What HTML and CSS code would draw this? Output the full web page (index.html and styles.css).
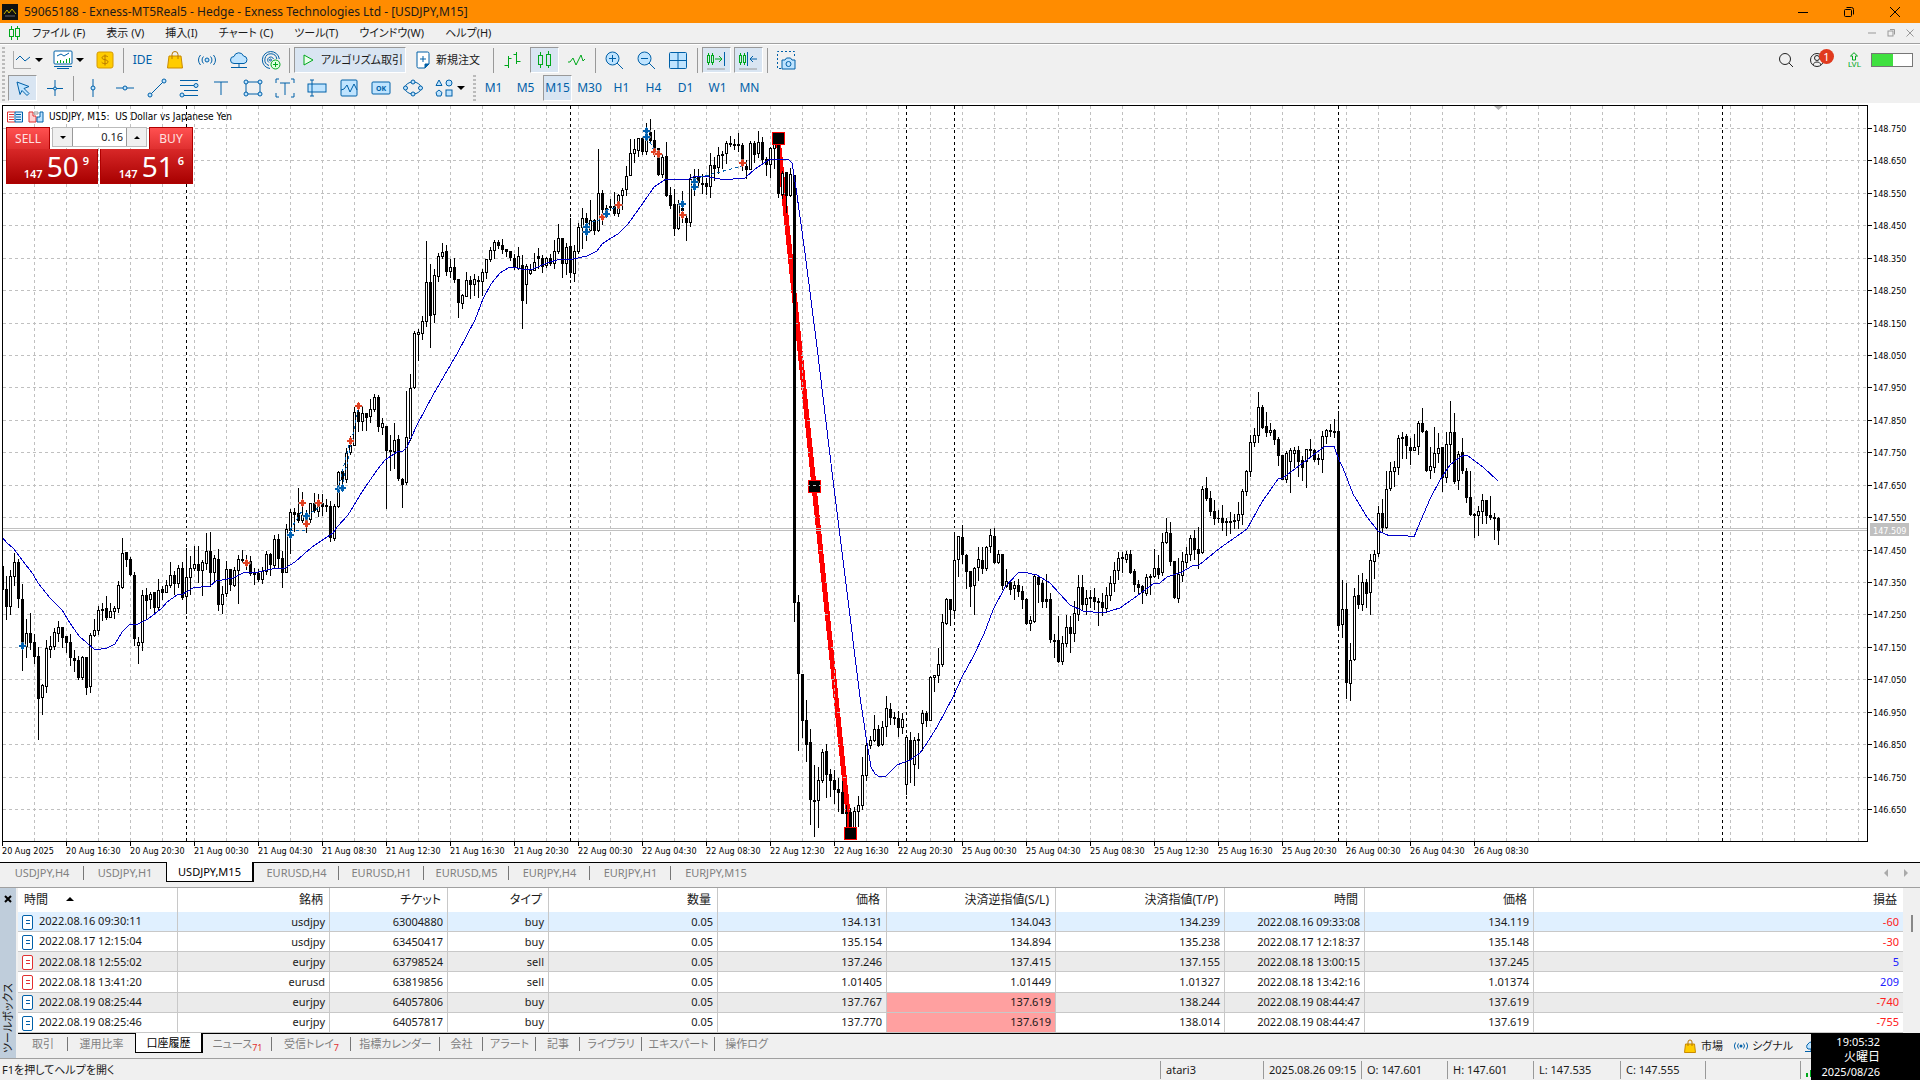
FILE: index.html
```
<!DOCTYPE html>
<html lang="ja">
<head>
    <meta charset="UTF-8">
    <meta name="viewport" content="width=device-width, initial-scale=1.0">
    <title>59065188 - Exness-MT5Real5 - Hedge - Exness Technologies Ltd - [USDJPY,M15]</title>
    <link rel="stylesheet" href="styles.css">
</head>
<body>
    <header class="titlebar">
        <svg class="app-icon" viewBox="0 0 16 16"><rect width="16" height="16" fill="#111"/><path d="M2 10l3-4 2 3 3-4 4 5" fill="none" stroke="#c8b400"/><path d="M3 12h10" stroke="#667"/></svg>
        <h1>59065188 - Exness-MT5Real5 - Hedge - Exness Technologies Ltd - [USDJPY,M15]</h1>
        <div class="win-buttons">
            <button aria-label="最小化"><svg viewBox="0 0 12 12"><path d="M1 6.5h10"/></svg></button>
            <button aria-label="元に戻す"><svg viewBox="0 0 12 12"><rect x="1.5" y="3.5" width="7" height="7" rx="1"/><path d="M3.5 1.5h5a2 2 0 0 1 2 2v5"/></svg></button>
            <button aria-label="閉じる"><svg viewBox="0 0 12 12"><path d="M1 1l10 10M11 1l-10 10"/></svg></button>
        </div>
    </header>

    <nav class="menubar">
        <svg class="menu-icon" viewBox="0 0 12 14"><path d="M3.5 0v3M3.5 11v3M9.5 0v2M9.5 11v3"/><rect x="1.5" y="3.5" width="4" height="7"/><rect x="7.5" y="2.5" width="4" height="8"/></svg>
        <button>ファイル (F)</button>
        <button>表示 (V)</button>
        <button>挿入(I)</button>
        <button>チャート (C)</button>
        <button>ツール(T)</button>
        <button>ウインドウ(W)</button>
        <button>ヘルプ(H)</button>
        <div class="child-buttons">
            <button aria-label="チャートを最小化"><svg viewBox="0 0 8 8"><path d="M0 4h8"/></svg></button>
            <button aria-label="チャートを元に戻す"><svg viewBox="0 0 8 8"><rect x="1" y="2" width="5" height="5"/><path d="M3 .5h4.5v5"/></svg></button>
            <button aria-label="チャートを閉じる"><svg viewBox="0 0 8 8"><path d="M.5.5l7 7M7.5.5l-7 7"/></svg></button>
        </div>
    </nav>

    <div class="toolbars">
        <div class="toolbar">
            <span class="grip"></span>
            <button class="tool drop" aria-label="ラインチャート"><svg viewBox="0 0 20 20"><path d="M1.5 1v17.5H19" stroke="#aaa"/><path d="M4 10l4-4 5 5 5-4"/></svg><i></i></button>
            <button class="tool drop" aria-label="チャートウィンドウ"><svg viewBox="0 0 20 20"><rect x="1" y="1" width="18" height="13" rx="1" fill="#fff"/><path d="M1 16.5h18M4 18.5h12"/><path d="M4 6l4-2 3 2 5-3"/><path d="M4.5 13v-2M7.5 13v-3M10.5 13v-2M13.5 13v-4M16.5 13v-5" stroke="#00a81c"/></svg><i></i></button>
            <button class="tool" aria-label="口座"><svg viewBox="0 0 20 20"><rect x="2" y="2" width="16" height="16" rx="2" fill="#fc0" stroke="#d69a00"/><path d="M13 7c-1-1.5-6-1.5-6 .8 0 2.4 6 1.4 6 4 0 2.4-5 2.4-6.3.5M10 4.5v11" stroke="#b87800"/></svg></button>
            <span class="sep"></span>
            <button class="tool">IDE</button>
            <button class="tool" aria-label="マーケット"><svg viewBox="0 0 20 20"><path d="M4 6h12l1.5 12h-15z" fill="#fc0" stroke="#c98a00"/><path d="M7 9V4.5a3 3 0 0 1 6 0V9" stroke="#b87800"/></svg></button>
            <button class="tool" aria-label="シグナル"><svg viewBox="0 0 20 20"><circle cx="10" cy="10" r="2" fill="#bfe4ff"/><path d="M6.5 6.5a5 5 0 0 0 0 7M13.5 6.5a5 5 0 0 1 0 7M3.5 5a8 8 0 0 0 0 10M16.5 5a8 8 0 0 1 0 10"/></svg></button>
            <button class="tool" aria-label="VPS"><svg viewBox="0 0 20 20"><path d="M5 13.5a3.5 3.5 0 0 1 0-7 5 5 0 0 1 9.5-.5 3.8 3.8 0 0 1 .5 7.5z" fill="#bfe4ff"/><path d="M10 14v3M2 17.5h16"/></svg></button>
            <button class="tool" aria-label="配信"><svg viewBox="0 0 20 20"><path d="M9 18.5A8.5 8.5 0 1 1 18.3 9M8 15.5a6 6 0 1 1 7.8-6.5M8 12.5a3 3 0 1 1 4.5-3.5"/><circle cx="9.5" cy="10" r="1"/><circle cx="14.5" cy="14.5" r="4.5" fill="#dfffdf" stroke="#00a81c"/><path d="M12 14.5h5M14.5 12v5" stroke="#00a81c"/></svg></button>
            <span class="sep"></span>
            <button class="tool wide on"><svg viewBox="0 0 20 20"><path d="M6 5l9 5-9 5z" stroke="#00a81c" fill="#eaffea"/></svg>アルゴリズム取引</button>
            <button class="tool wide"><svg viewBox="0 0 20 20"><path d="M4 2h10.5a1.5 1.5 0 0 1 1.5 1.5V14l-4 4H5.5A1.5 1.5 0 0 1 4 16.5z" fill="#fff"/><path d="M16 14h-4v4z" fill="#0060a8"/><path d="M7 9h6M10 6v6"/></svg>新規注文</button>
            <span class="sep"></span>
            <button class="tool" aria-label="バーチャート"><svg viewBox="0 0 20 20" class="green"><path d="M6.5 6v12M2.5 15.5h4M6.5 8.5h3M14.5 2v12M11.5 4.5h3M14.5 11.5h4"/></svg></button>
            <button class="tool on" aria-label="ローソク足"><svg viewBox="0 0 20 20" class="green"><path d="M6.5 2v3M6.5 15v3M14.5 1v3M14.5 16v2"/><rect x="4.5" y="5.5" width="4" height="9"/><rect x="12.5" y="4.5" width="4" height="11"/></svg></button>
            <button class="tool" aria-label="ライン"><svg viewBox="0 0 20 20" class="green"><path d="M2 12h2l3-4 3 7 5-10 2 6 2-2"/></svg></button>
            <span class="sep"></span>
            <button class="tool" aria-label="拡大"><svg viewBox="0 0 20 20"><circle cx="8.5" cy="8.5" r="6.5" fill="#bfe4ff"/><path d="M13 13l6 6M5 8.5h7M8.5 5v7"/></svg></button>
            <button class="tool" aria-label="縮小"><svg viewBox="0 0 20 20"><circle cx="8.5" cy="8.5" r="6.5" fill="#bfe4ff"/><path d="M13 13l6 6M5 8.5h7"/></svg></button>
            <button class="tool" aria-label="タイル表示"><svg viewBox="0 0 20 20"><rect x="1.5" y="2.5" width="17" height="16" rx="1" fill="#bfe4ff"/><path d="M10 2.5v16M1.5 10.5h17"/></svg></button>
            <span class="sep"></span>
            <button class="tool on" aria-label="自動スクロール"><svg viewBox="0 0 20 20"><g class="green"><path d="M2.5 3v2M2.5 13v2M6.5 3v2M6.5 13v2M9 9h7M13 6l3 3-3 3"/><rect x="1.5" y="5.5" width="2" height="7"/><rect x="5.5" y="5.5" width="2" height="7"/></g><path d="M18.5 2v14"/><path d="M1 19h18" stroke="#999"/></svg></button>
            <button class="tool on" aria-label="チャートシフト"><svg viewBox="0 0 20 20"><g class="green"><path d="M2.5 3v2M2.5 13v2M6.5 3v2M6.5 13v2"/><rect x="1.5" y="5.5" width="2" height="7"/><rect x="5.5" y="5.5" width="2" height="7"/></g><path d="M9.5 2v14M12 9h7M15 6l-3 3 3 3"/><path d="M1 19h18" stroke="#999"/></svg></button>
            <span class="sep"></span>
            <button class="tool" aria-label="スクリーンショット"><svg viewBox="0 0 20 20"><path d="M5 18.5H1.5v-17h17V8" stroke-dasharray="2 2"/><path d="M6 10h3l1.5-2h4l1.5 2h3v9H6z" fill="#bfe4ff"/><circle cx="12.5" cy="14" r="2.5"/></svg></button>
            <div class="account">
                <button class="tool" aria-label="検索"><svg viewBox="0 0 20 20" class="dark"><circle cx="9" cy="9" r="5.5"/><path d="M13 13l4 4"/></svg></button>
                <button class="tool user" aria-label="通知"><svg viewBox="0 0 20 20" class="dark"><circle cx="9" cy="10" r="6.5"/><circle cx="9" cy="8" r="2.5"/><path d="M5 15c1-4 7-4 8 0"/></svg><b class="badge">1</b></button>
                <button class="lvl"><svg viewBox="0 0 10 9"><path d="M5 .7L8.5 4H6.5v4h-3V4H1.5z"/></svg>LVL</button>
                <span class="meter"><i></i></span>
            </div>
        </div>

        <div class="toolbar second">
            <span class="grip"></span>
            <button class="tool on" aria-label="カーソル"><svg viewBox="0 0 20 20"><path d="M4 4l12 4.5-5 2 5 5-2 2-5-5-2 4z" fill="#bfe4ff"/></svg></button>
            <button class="tool" aria-label="十字カーソル"><svg viewBox="0 0 20 20"><path d="M10 2v16M2 10.5h16"/><circle cx="10" cy="10.5" r="1.5" fill="#bfe4ff"/></svg></button>
            <span class="sep"></span>
            <button class="tool" aria-label="垂直線"><svg viewBox="0 0 20 20"><path d="M10 1v18"/><circle cx="10" cy="10" r="2" fill="#bfe4ff"/></svg></button>
            <button class="tool" aria-label="水平線"><svg viewBox="0 0 20 20"><path d="M1 10h18"/><circle cx="10" cy="10" r="2" fill="#bfe4ff"/></svg></button>
            <button class="tool" aria-label="トレンドライン"><svg viewBox="0 0 20 20"><path d="M3 17L17 3"/><circle cx="3" cy="17" r="2" fill="#bfe4ff"/><circle cx="17" cy="3" r="2" fill="#bfe4ff"/></svg></button>
            <button class="tool" aria-label="フィボナッチ"><svg viewBox="0 0 20 20"><path d="M1 2.5h18M1 7.5h14M5 12.5h14M5 17.5h14"/><circle cx="17" cy="7.5" r="2" fill="#bfe4ff"/><circle cx="3" cy="17" r="2" fill="#bfe4ff"/></svg></button>
            <button class="tool" aria-label="テキスト"><svg viewBox="0 0 20 20"><path d="M3 4h14M10 4v13"/></svg></button>
            <button class="tool" aria-label="長方形"><svg viewBox="0 0 20 20"><rect x="3" y="4" width="14" height="12"/><g fill="#bfe4ff"><circle cx="3" cy="4" r="2"/><circle cx="17" cy="4" r="2"/><circle cx="3" cy="16" r="2"/><circle cx="17" cy="16" r="2"/></g></svg></button>
            <button class="tool" aria-label="ラベル"><svg viewBox="0 0 20 20"><path d="M5 5h10M10 5v12M1 5V1h3M16 1h3v4M1 15v4h3M16 19h3v-4"/></svg></button>
            <button class="tool" aria-label="入力"><svg viewBox="0 0 20 20"><rect x="1" y="6" width="18" height="8" fill="#bfe4ff"/><path d="M5 2v16M3 2h4M3 18h4"/></svg></button>
            <button class="tool" aria-label="チャートオブジェクト"><svg viewBox="0 0 20 20"><rect x="2" y="2" width="16" height="16" rx="1" fill="#bfe4ff"/><path d="M2 12l3-1 3-4 3 7 4-8 3 6"/></svg></button>
            <button class="tool" aria-label="ボタン"><svg viewBox="0 0 20 20"><rect x="1" y="4" width="18" height="12" rx="1" fill="#bfe4ff"/><text x="10" y="13">OK</text></svg></button>
            <button class="tool" aria-label="楕円"><svg viewBox="0 0 20 20"><ellipse cx="10" cy="10" rx="8" ry="6"/><g fill="#bfe4ff"><circle cx="10" cy="4" r="2"/><circle cx="2.5" cy="10" r="2"/><circle cx="17.5" cy="10" r="2"/><circle cx="10" cy="16" r="2"/></g></svg></button>
            <button class="tool drop" aria-label="図形"><svg viewBox="0 0 20 20"><g fill="#bfe4ff"><path d="M5 2l3 5.5H2z"/><circle cx="15" cy="5" r="3"/><path d="M5 12l3 2.5-1 3.5H3l-1-3.5z"/><rect x="12" y="12" width="6" height="6"/></g></svg><i></i></button>
            <span class="grip"></span>
            <button class="tool">M1</button>
            <button class="tool">M5</button>
            <button class="tool on">M15</button>
            <button class="tool">M30</button>
            <button class="tool">H1</button>
            <button class="tool">H4</button>
            <button class="tool">D1</button>
            <button class="tool">W1</button>
            <button class="tool">MN</button>
        </div>
    </div>

    <main class="chart">
        <svg id="chart" viewBox="0 103 1920 759" role="img" aria-label="USDJPY M15"></svg>
        <div class="chart-title">
            <svg viewBox="0 0 16 12"><path d="M8 1H.5v10H8M2 3.5h5M2 6h5M2 8.5h5" stroke="#e03030" fill="none"/><path d="M8 1h7.5v10H8zM9 3.5h5M9 6h5M9 8.5h5" stroke="#0060a8" fill="#d8eeff"/></svg>
            <svg viewBox="0 0 16 12"><path d="M1 1h4v4h3v6H1z" stroke="#e03030" fill="#ffd0d0"/><path d="M15 1h-3v5H9v5h6z" stroke="#0060a8" fill="#bfe4ff"/><path d="M6 1h4v2H6z" stroke="#999" fill="#fff"/></svg>
            <span>USDJPY, M15:&nbsp; US Dollar vs Japanese Yen</span>
        </div>
        <form class="one-click">
            <button type="button" class="side sell">SELL</button>
            <div class="volume">
                <button type="button" aria-label="減らす"><i class="down"></i></button>
                <input type="text" value="0.16" aria-label="数量">
                <button type="button" aria-label="増やす"><i class="up"></i></button>
            </div>
            <button type="button" class="side buy">BUY</button>
            <button type="button" class="quote bid"><small>147</small><strong>50</strong><sup>9</sup></button>
            <button type="button" class="quote ask"><small>147</small><strong>51</strong><sup>6</sup></button>
        </form>
    </main>

    <nav class="chart-tabs">
        <button>USDJPY,H4</button>
        <button class="plain">USDJPY,H1</button>
        <button class="active">USDJPY,M15</button>
        <button>EURUSD,H4</button>
        <button>EURUSD,H1</button>
        <button>EURUSD,M5</button>
        <button>EURJPY,H4</button>
        <button>EURJPY,H1</button>
        <button class="plain">EURJPY,M15</button>
        <span class="scroll-arrows"><i></i><i class="next"></i></span>
    </nav>

    <section class="toolbox">
        <div class="toolbox-side">
            <button aria-label="閉じる"><svg viewBox="0 0 8 8"><path d="M1 1l6 6M7 1l-6 6"/></svg></button>
            <span>ツールボックス</span>
        </div>
        <div class="toolbox-body">
            <div class="history">
                <table>
                    <colgroup>
                        <col class="c-time"><col class="c-symbol"><col class="c-ticket"><col class="c-type"><col class="c-price"><col class="c-price"><col class="c-price"><col class="c-price"><col class="c-close"><col class="c-price"><col>
                    </colgroup>
                    <thead>
                        <tr><th>時間<i class="sort"></i></th><th>銘柄</th><th>チケット</th><th>タイプ</th><th>数量</th><th>価格</th><th>決済逆指値(S/L)</th><th>決済指値(T/P)</th><th>時間</th><th>価格</th><th>損益</th></tr>
                    </thead>
                    <tbody>
                        <tr class="selected"><td><i class="doc"></i>2022.08.16 09:30:11</td><td>usdjpy</td><td>63004880</td><td>buy</td><td>0.05</td><td>134.131</td><td>134.043</td><td>134.239</td><td>2022.08.16 09:33:08</td><td>134.119</td><td class="loss">-60</td></tr>
                        <tr><td><i class="doc"></i>2022.08.17 12:15:04</td><td>usdjpy</td><td>63450417</td><td>buy</td><td>0.05</td><td>135.154</td><td>134.894</td><td>135.238</td><td>2022.08.17 12:18:37</td><td>135.148</td><td class="loss">-30</td></tr>
                        <tr class="alt"><td><i class="doc red"></i>2022.08.18 12:55:02</td><td>eurjpy</td><td>63798524</td><td>sell</td><td>0.05</td><td>137.246</td><td>137.415</td><td>137.155</td><td>2022.08.18 13:00:15</td><td>137.245</td><td class="gain">5</td></tr>
                        <tr><td><i class="doc red"></i>2022.08.18 13:41:20</td><td>eurusd</td><td>63819856</td><td>sell</td><td>0.05</td><td>1.01405</td><td>1.01449</td><td>1.01327</td><td>2022.08.18 13:42:16</td><td>1.01374</td><td class="gain">209</td></tr>
                        <tr class="alt"><td><i class="doc"></i>2022.08.19 08:25:44</td><td>eurjpy</td><td>64057806</td><td>buy</td><td>0.05</td><td>137.767</td><td class="hit">137.619</td><td>138.244</td><td>2022.08.19 08:44:47</td><td>137.619</td><td class="loss">-740</td></tr>
                        <tr><td><i class="doc"></i>2022.08.19 08:25:46</td><td>eurjpy</td><td>64057817</td><td>buy</td><td>0.05</td><td>137.770</td><td class="hit">137.619</td><td>138.014</td><td>2022.08.19 08:44:47</td><td>137.619</td><td class="loss">-755</td></tr>
                    </tbody>
                </table>
                <div class="scrollbar"><i></i></div>
            </div>
            <div class="toolbox-tabs">
                <button>取引</button>
                <button class="plain">運用比率</button>
                <button class="active">口座履歴</button>
                <button>ニュース<sub>71</sub></button>
                <button>受信トレイ<sub>7</sub></button>
                <button>指標カレンダー</button>
                <button>会社</button>
                <button>アラート</button>
                <button>記事</button>
                <button>ライブラリ</button>
                <button>エキスパート</button>
                <button class="plain">操作ログ</button>
                <div class="services">
                    <a href="#"><svg viewBox="0 0 14 14"><path d="M2.5 5h9l1 8.5h-11z" fill="#fc0" stroke="#c98a00"/><path d="M5 7V3a2 2 0 0 1 4 0v4" stroke="#b87800" fill="none"/></svg>市場</a>
                    <a href="#"><svg viewBox="0 0 14 14"><circle cx="7" cy="7" r="1.5" fill="#0060a8"/><path d="M4.5 4.5a4 4 0 0 0 0 5M9.5 4.5a4 4 0 0 1 0 5M1.5 3.5a6 6 0 0 0 0 7M12.5 3.5a6 6 0 0 1 0 7" stroke="#0060a8" fill="none"/></svg>シグナル</a>
                    <a href="#" aria-label="VPS"><svg viewBox="0 0 14 14"><path d="M4 10a3 3 0 0 1 0-5 4 4 0 0 1 7 0 2.5 2.5 0 0 1 0 5zM7 10v2M1 12.5h12" stroke="#0060a8" fill="#bfe4ff"/></svg></a>
                </div>
            </div>
        </div>
    </section>

    <footer class="statusbar">
        <span class="hint">F1を押してヘルプを開く</span>
        <span>atari3</span>
        <span>2025.08.26 09:15</span>
        <span>O: 147.601</span>
        <span>H: 147.601</span>
        <span>L: 147.535</span>
        <span>C: 147.555</span>
        <span></span>
        <span><svg viewBox="0 0 12 12"><path d="M0 8h2v4H0zM4 5h2v7H4zM8 2h2v10H8z" fill="#00a81c"/></svg></span>
    </footer>

    <div class="clock">
        <time>19:05:32</time>
        <span class="day">火曜日</span>
        <time>2025/08/26</time>
    </div>
    <script src="chart.js"></script>
</body>
</html>
```
FILE: styles.css
```
* {
    box-sizing: border-box;
}
body {
    margin: 0;
    height: 100vh;
    display: flex;
    flex-direction: column;
    overflow: hidden;
    background: #f0f0f0;
    color: #1a1a1a;
    font-family: "Noto Sans", "Noto Sans CJK JP", sans-serif;
    font-size: 11px;
    line-height: 16px;
    font-feature-settings: "palt";
}
button,
input {
    font: inherit;
    font-feature-settings: inherit;
    color: inherit;
    background: none;
    border: 0;
    padding: 0;
    margin: 0;
    white-space: nowrap;
}
svg {
    display: block;
    flex: none;
}
/* title bar */
.titlebar {
    display: flex;
    align-items: center;
    height: 23px;
    flex: none;
    padding-left: 2px;
    background: #ff8c00;
}
.app-icon {
    width: 16px;
    height: 16px;
}
.titlebar h1 {
    margin: 0 auto 0 6px;
    font-size: 12px;
    font-weight: normal;
}
.win-buttons {
    display: flex;
    padding-right: 2px;
}
.win-buttons button {
    width: 46px;
    height: 20px;
    display: grid;
    place-items: center;
}
.win-buttons svg {
    width: 12px;
    height: 12px;
    fill: none;
    stroke: #000;
}
/* menu */
.menubar {
    display: flex;
    align-items: center;
    gap: 21px;
    height: 21px;
    flex: none;
    padding: 0 6px 0 8px;
    border-bottom: 1px solid #a0a0a0;
}
.menu-icon {
    width: 12px;
    height: 14px;
    margin-right: -9px;
    fill: none;
    stroke: #00a81c;
}
.child-buttons {
    display: flex;
    gap: 11px;
    margin-left: auto;
}
.child-buttons svg {
    width: 8px;
    height: 8px;
    fill: none;
    stroke: #999;
}
/* toolbars */
.toolbars {
    flex: none;
    height: 59px;
    padding-top: 1px;
    border-top: 1px solid #fff;
}
.toolbar {
    display: flex;
    align-items: center;
    height: 28px;
    color: #0060a8;
}
.grip {
    width: 3px;
    height: 26px;
    margin: 0 3px 0 2px;
    background: repeating-linear-gradient(#bbb 0 2px, transparent 2px 4px);
}
.tool {
    width: 29px;
    height: 26px;
    margin-right: 3px;
    display: flex;
    align-items: center;
    justify-content: center;
    border: 1px solid transparent;
    font-size: 12px;
}
.tool svg {
    width: 20px;
    height: 20px;
    fill: none;
    stroke: #0060a8;
}
.tool svg.green,
.tool .green {
    stroke: #00a81c;
}
.tool svg.dark {
    stroke: #222;
}
.tool svg text {
    fill: #0060a8;
    stroke: none;
    font-size: 7px;
    font-weight: bold;
    text-anchor: middle;
}
.tool.on {
    background: #d9e5f2;
    border-color: #999 #fff #fff #999;
}
.tool.drop {
    width: 38px;
    gap: 3px;
}
.tool.drop i {
    border: 4px solid transparent;
    border-top-color: #000;
    border-bottom: 0;
}
.tool.wide {
    width: auto;
    padding: 0 8px 0 3px;
    gap: 3px;
    font-size: 11px;
    color: #1a1a1a;
}
.tool.wide.on {
    padding-right: 2px;
}
.sep {
    width: 1px;
    height: 25px;
    margin: 0 4px 0 1px;
    background: #999;
}
.account {
    display: flex;
    align-items: center;
    margin-left: auto;
    padding-right: 7px;
}
.user {
    position: relative;
}
.badge {
    position: absolute;
    top: 1px;
    right: -2px;
    width: 15px;
    height: 15px;
    border-radius: 50%;
    background: #e03a1e;
    color: #fff;
    font-size: 11px;
    line-height: 15px;
    font-weight: normal;
}
.lvl {
    display: flex;
    flex-direction: column;
    align-items: center;
    margin: 0 10px 0 12px;
    color: #00a81c;
    font-size: 8px;
    line-height: 8px;
    font-family: Roboto, sans-serif;
}
.lvl svg {
    width: 10px;
    height: 9px;
    fill: none;
    stroke: #00a81c;
}
.meter {
    width: 42px;
    height: 14px;
    border: 1px solid #777;
    background: #fff;
}
.meter i {
    display: block;
    width: 52%;
    height: 100%;
    background: #40e040;
}
/* chart */
.chart {
    position: relative;
    flex: 1;
    min-height: 0;
    background: #fff;
}
#chart {
    width: 100%;
    height: 100%;
    font-family: "DejaVu Sans Condensed", "DejaVu Sans", sans-serif;
    font-size: 9px;
}
.chart-title {
    position: absolute;
    left: 7px;
    top: 6px;
    display: flex;
    align-items: center;
    gap: 5px;
    font: 10px/16px "DejaVu Sans Condensed", "DejaVu Sans", sans-serif;
    color: #000;
}
.chart-title svg {
    width: 16px;
    height: 12px;
}
.one-click {
    position: absolute;
    left: 6px;
    top: 24px;
    width: 187px;
    display: grid;
    grid-template-columns: 44px 49px 50px 44px;
    grid-template-rows: 22px 35px;
    color: #fff;
}
.side {
    background: linear-gradient(#ff5050, #e03030);
    border: 1px solid #b00000;
    border-bottom: 0;
    font-size: 12px;
    line-height: 20px;
    color: #ffe0e0;
}
.volume {
    grid-column: 2 / 4;
    display: flex;
    height: 20px;
    margin: 0 2px;
    border: 1px solid #bbb;
    background: #f0f0f0;
    color: #222;
}
.volume button {
    width: 19px;
    display: grid;
    place-items: center;
}
.volume input {
    flex: 1;
    min-width: 0;
    padding-right: 3px;
    border: solid #999;
    border-width: 0 1px;
    background: #fff;
    text-align: right;
}
.volume i {
    border: 3px solid transparent;
}
.volume .down {
    border-top-color: #000;
    border-bottom: 0;
}
.volume .up {
    border-bottom-color: #000;
    border-top: 0;
}
.quote {
    grid-column: span 2;
    display: flex;
    justify-content: flex-end;
    align-items: flex-end;
    gap: 4px;
    padding: 0 8px 3px 0;
    background: linear-gradient(#d82828, #a80000);
    border: 1px solid #b00000;
    border-top: 0;
}
.quote.bid {
    margin-right: 1px;
}
.quote.ask {
    margin-left: 1px;
}
.quote small {
    font-size: 11px;
    line-height: 13px;
    font-weight: 600;
}
.quote strong {
    font-size: 28px;
    line-height: 28px;
    font-weight: normal;
}
.quote sup {
    align-self: flex-start;
    font-size: 11px;
    line-height: 24px;
    font-weight: 600;
}
/* chart tabs */
.chart-tabs,
.toolbox-tabs {
    display: grid;
    flex: none;
    height: 25px;
    border-top: 1px solid #000;
    color: #808080;
    text-align: center;
}
.chart-tabs {
    grid-template-columns: 84px 82px 88px 85px 85px 85px 81px 81px 90px 1fr;
}
.chart-tabs button,
.toolbox-tabs button {
    height: 19px;
    line-height: 19px;
    background: linear-gradient(#777, #777) right 3px / 1px 14px no-repeat;
}
.chart-tabs .plain,
.toolbox-tabs .plain {
    background: none;
}
.chart-tabs .active,
.toolbox-tabs .active {
    margin-top: -1px;
    height: 20px;
    background: #fff;
    border: 1px solid #000;
    border-top: 0;
    border-right-width: 2px;
    color: #000;
}
.scroll-arrows {
    display: flex;
    align-items: center;
    justify-content: flex-end;
    gap: 16px;
    height: 20px;
    padding-right: 12px;
}
.scroll-arrows i {
    border: 4px solid transparent;
    border-right-color: #aaa;
    border-left: 0;
}
.scroll-arrows .next {
    border-right: 0;
    border-left: 4px solid #aaa;
}
/* toolbox */
.toolbox {
    display: flex;
    flex: none;
    border-top: 1px solid #a0a0a0;
    border-bottom: 1px solid #a0a0a0;
}
.toolbox-side {
    display: flex;
    flex-direction: column;
    justify-content: space-between;
    align-items: center;
    width: 16px;
    margin-right: 2px;
    padding: 7px 0 5px;
    background: #bfcddb;
}
.toolbox-side svg {
    width: 8px;
    height: 8px;
    stroke: #000;
    stroke-width: 2;
}
.toolbox-side span {
    writing-mode: vertical-rl;
    text-orientation: sideways;
    transform: rotate(180deg);
}
.toolbox-body {
    flex: 1;
    min-width: 0;
}
.history {
    display: flex;
    height: 145px;
    overflow: hidden;
}
.history table {
    flex: 1;
    table-layout: fixed;
    border-collapse: separate;
    border-spacing: 0;
    background: #fff;
}
.c-time { width: 160px; }
.c-symbol { width: 152px; }
.c-ticket { width: 118px; }
.c-type { width: 101px; }
.c-price { width: 169px; }
.c-close { width: 140px; }
.history th,
.history td {
    padding: 0 4px 0 0;
    text-align: right;
    font-weight: normal;
    white-space: nowrap;
    border-right: 1px solid #c8c8c8;
}
.history th {
    height: 24px;
    padding-right: 6px;
    font-size: 12px;
}
.history td {
    height: 20px;
    border-bottom: 1px solid #c8c8c8;
}
.history th:first-child,
.history td:first-child {
    text-align: left;
    padding-left: 4px;
}
.history th:first-child {
    padding-left: 6px;
}
.history th:last-child,
.history td:last-child {
    border-right: 0;
}
.selected {
    background: #e0f0ff;
}
.alt {
    background: #ebebeb;
}
.history .hit {
    background: #ffa0a0;
}
.loss {
    color: #ff2020;
}
.gain {
    color: #2020ff;
}
.sort {
    display: inline-block;
    margin: 0 0 3px 18px;
    border: 4px solid transparent;
    border-top: 0;
    border-bottom-color: #000;
}
.doc {
    display: inline-block;
    width: 11px;
    height: 15px;
    margin-right: 6px;
    vertical-align: middle;
    border: 1px solid #0060a8;
    border-radius: 2px;
    color: #0060a8;
    background: linear-gradient(currentColor, currentColor) 3px 4px / 4px 1px no-repeat, linear-gradient(currentColor, currentColor) 3px 7px / 4px 1px no-repeat, #fff;
}
.doc.red {
    border-color: #e03030;
    color: #e03030;
}
.scrollbar {
    width: 17px;
    padding: 27px 0 0 8px;
}
.scrollbar i {
    display: block;
    width: 2px;
    height: 17px;
    background: #888;
}
.toolbox-tabs {
    grid-template-columns: 50px 67px 68px 69px 79px 89px 43px 53px 44px 62px 73px 63px 1fr;
}
.toolbox-tabs sub {
    font-size: 9px;
    line-height: 9px;
    color: #e03030;
}
.services {
    display: flex;
    justify-content: flex-end;
    align-items: center;
    gap: 11px;
    padding-right: 102px;
}
.services a {
    display: flex;
    align-items: center;
    gap: 4px;
    color: #1a1a1a;
    text-decoration: none;
}
.services svg {
    width: 14px;
    height: 14px;
}
/* status bar */
.statusbar {
    display: grid;
    flex: none;
    grid-template-columns: 1fr 103px 98px 86px 86px 87px 85px 95px 120px;
    align-items: center;
    height: 21px;
}
.statusbar span {
    height: 18px;
    padding-left: 5px;
    border-left: 1px solid #999;
    line-height: 18px;
}
.statusbar .hint {
    padding-left: 2px;
    border: 0;
}
.statusbar svg {
    width: 12px;
    height: 12px;
    margin-top: 4px;
}
.clock {
    position: fixed;
    right: 0;
    bottom: 0;
    width: 109px;
    height: 46px;
    padding-right: 40px;
    display: flex;
    flex-direction: column;
    align-items: flex-end;
    justify-content: space-around;
    background: #000;
    color: #fff;
    line-height: 14px;
}
.clock .day {
    font-size: 12px;
}
```
FILE: chart.js
```
const svg = document.querySelector('#chart');
const NS = 'http://www.w3.org/2000/svg';

// each bar: high open close low, in thirds of a pixel below the block's top
const blocks = [
    { top: 380, bars: `504 560 628 628,588 627 680 717,570 680 589 704,519 589 547 616,537 547 656 681,614 657 800 870,719 800 760 833,699 760 788 809,762 787 829 851,801 829 956 1077,
912 952 916 1002,781 919 805 936,768 808 799 831,745 799 757 808,723 760 742 784,742 742 772 802,769 769 788 817,764 787 833 855,811 835 842 875,830 841 893 897,
830 892 832 898,832 832 923 942,759 919 766 937,717 766 751 769,680 751 691 763,670 688 691 720,648 685 713 717,670 712 694 713,680 694 685 716,603 685 616 698,
475 622 520 624,517 517 539 558,531 538 584 587,576 586 776 797,773 797 787 849,630 787 646 812,624 646 662 717,637 658 643 686,637 637 683 703,597 682 631 692,
619 628 637 658,601 637 615 637,546 616 586 621,573 586 611 642,556 611 565 623,546 565 653 659,504 650 592 700,529 592 565 642,498 565 553 571,498 553 570 606,
540 571 547 645,459 550 514 568,457 514 577 618,526 578 535 608,508 538 674 692,618 674 643 699,544 640 568 648,567 568 614 632,562 616 571 618,525 571 538 671,
510 539 542 546,525 545 556 568,530 544 581 586,565 577 584 614,568 581 599 604,562 599 574 611,514 574 522 583,519 522 554 586,465 556 478 566,463 478 535 566,
513 535 578 621,432 577 448 578,387 452 397 519,385 397 403 453,324 400 422 428,336 421 406 427,391 415 425 456,370 419 371 428,340 371 392 398,342 395 370 410,
342 371 380 406,358 377 380 394,363 378 473 483,374 475 379 480,273 379 277 381,271 273 299 330,205 298 220 308,170 217 196 223,81 196 97 196,90 97 125 154,
79 125 100 152,100 100 113 152,58 110 88 128,42 88 52 94,45 52 140 153,115 142 130 163,139 139 212 386,166 211 215 270,129 214 181 264,166 178 296 302,296 298 314 381` },
    { top: 100, bars: `873 1148 1012 1152,822 1015 865 1021,694 862 700 865,688 703 697 780,648 700 664 717,424 664 547 680,492 547 647 741,507 643 526 668,460 529 469 543,
429 469 457 475,436 454 515 527,477 514 502 533,476 502 539 548,538 538 608 651,583 610 586 624,516 589 541 590,528 541 554 594,522 553 538 585,528 541 545 593,
508 545 517 587,477 517 479 536,442 479 451 483,421 451 427 474,421 427 436 446,418 436 449 461,448 448 455 469,454 454 472 480,463 474 503 509,442 505 469 507,
466 496 602 686,493 553 499 609,493 520 511 522,461 511 487 512,446 469 475 505,466 474 500 516,473 496 475 503,464 475 491 495,420 491 454 504,372 454 415 460,
415 415 491 533,430 491 442 522,355 438 518 532,436 521 454 543,370 454 382 459,324 382 355 444,339 354 366 420,300 391 361 394,357 361 391 404,148 391 280 394,
271 280 328 373,316 325 331 340,297 323 319 330,276 318 341 346,283 341 287 349,264 286 271 328,198 268 229 285,117 226 160 226,117 160 148 188,115 150 115 168,
112 115 155 163,71 155 118 164,57 97 121 124,90 120 146 170,144 145 224 225,163 222 171 232,126 169 286 288,261 286 317 326,267 312 386 407,300 384 313 387,
274 325 332 368,343 354 368 420,223 367 238 378,209 240 232 286,208 229 247 262,222 249 253 280,234 250 259 284,159 259 196 291,172 196 205 240,141 202 166 220,
153 163 167 205,123 160 130 190,109 130 133 140,118 133 136 147,99 133 136 153,130 135 180 210,180 198 208 236,123 208 130 209,123 130 163 188,93 160 127 171,
111 126 177 188,171 178 192 227,141 193 145 231,118 145 130 204,115 115 281 291,213 283 220 296,216 217 286 336,205 286 222 290,225 225 1506 1563` },
    { top: 480, bars: `345 367 581 812,582 582 721 771,660 720 792 843,747 787 959 1032,855 961 965 1068,861 962 901 1041,808 901 817 908,793 814 884 951,867 882 902 948,
870 901 929 969,894 928 938 993,904 937 1001 1001,976 996 999 1039,985 997 1050 1060,981 1060 994 1065,948 994 976 1038,831 976 886 987,790 886 796 902,769 796 781 806,
705 781 748 783,736 748 795 800,723 794 742 795,648 739 685 768,669 687 712 732,697 711 714 734,693 714 743 768,699 742 718 760,766 913 772 942,756 781 838 907,
771 853 781 915,759 778 782 864,690 730 700 812,693 700 722 738,588 721 592 722,585 592 586 633,504 586 553 606,402 553 427 559,354 430 358 432,357 358 389 437,
165 391 241 408,168 238 169 288,136 172 223 249,222 225 273 324,273 273 318 380,261 316 265 402,201 262 238 300,201 240 265 279,199 265 202 270,148 199 166 217,
145 169 248 250,211 247 223 250,222 222 317 329,267 318 304 321,306 306 329 342,304 325 316 357,297 316 334 348,318 334 358 386,354 357 431 432,408 430 421 450,
286 424 289 426,288 291 312 366,300 309 365 381,282 358 364 382,339 358 479 486,462 480 483 531,408 480 545 548,468 545 490 554,405 490 442 498,408 442 461 516,
364 461 400 483,285 403 322 420,286 322 372 387,331 373 355 402,330 355 352 382,324 352 365 387,354 363 368 435,339 367 383 406,321 385 346 396,288 346 310 362,
247 310 271 334,217 271 235 298,216 231 236 276,213 237 223 247,210 222 276 279,267 273 314 334,301 314 321 342,316 319 338 371,282 341 291 345,282 289 293 342,
208 289 265 293,226 264 282 295,160 277 187 285,114 187 157 189,127 160 245 255,243 244 352 354,234 355 283 368,216 287 244 303,202 247 223 263,166 223 175 240,
151 175 209 237,142 207 221 264,18 217 28 219` },
    { top: 380, bars: `291 325 355 361,333 354 395 406,360 394 416 432,391 414 416 427,375 415 427 450,415 424 428 465,397 424 427 459,403 421 425 445,367 421 403 446,
327 403 334 432,271 333 274 347,166 274 187 289,144 187 166 199,37 166 82 186,76 82 142 144,96 139 158 168,129 158 151 166,148 151 179 194,172 178 226 255,
225 226 298 299,214 298 220 306,205 244 211 336,201 220 211 262,199 211 243 288,229 241 263 300,207 244 208 323,178 208 212 229,207 210 238 244,222 234 238 252,
154 238 169 276,148 169 151 189,133 151 155 168,117 154 157 171,94 154 737 742,600 734 688 771,610 688 908 954,789 910 841 960,625 838 649 841,586 646 674 686,
579 673 607 692,598 607 640 683,522 637 541 702,511 544 523 594,379 520 400 530,357 400 443 456,273 443 328 444,247 325 274 330,243 274 262 318,166 262 175 282,
156 172 176 234,162 169 197 234,175 202 212 252,163 211 202 212,123 199 130 222,85 130 155 158,150 154 272 275,202 271 259 296,141 262 220 276,159 220 205 246,
202 202 292 333,157 292 193 306,64 193 157 248,99 157 304 310,213 301 223 328,175 217 272 280,265 273 353 368,273 352 404 405,400 402 406 471,378 406 394 465,
342 395 361 430,361 361 407 429,348 406 413 418,399 411 416 477,411 414 452 492` },
];

// moving average, x,y
const average = '3,538 6,542 14,549 22,560 33,574 38,583 50,598 62,610 70,623 79,636 95,650 107,648 115,644 122,632 130,624 138,624 148,619 162,608 167,602 177,595 183,594 193,588 210,586 216,581 233,578 245,572 258,572 272,569 285,568 295,562 312,547 333,533 337,527 348,515 362,492 377,470 385,460 397,452 403,451 407,447 417,425 433,395 440,383 458,352 475,320 483,299 491,284 500,273 510,267 517,268 525,270 533,269 547,263 560,259 573,259 587,256 597,251 602,244 611,238 618,234 628,224 643,203 654,187 666,179 680,179 687,180 693,177 703,176 720,179 733,179 745,178 755,169 770,159 788,159 792,163 796,188 805,253 817,347 833,480 848,600 860,697 867,743 871,767 875,774 880,777 886,776 897,765 910,760 920,753 927,743 937,727 953,697 962,677 973,657 984,634 993,610 1005,587 1018,573 1023,572 1037,575 1050,583 1070,605 1083,611 1103,613 1120,608 1137,596 1153,584 1160,583 1167,577 1182,572 1192,566 1199,565 1220,548 1240,534 1247,529 1262,502 1278,479 1283,478 1303,463 1325,446 1334,446 1339,460 1343,468 1353,494 1367,517 1378,531 1390,536 1402,535 1414,537 1418,527 1430,499 1440,480 1450,465 1460,457 1465,455 1468,456 1483,467 1498,481';

const buys = [[22, 646], [290, 535], [306, 516], [338, 489], [342, 488], [586, 227], [586, 232], [606, 214], [646, 131], [646, 137], [682, 204], [694, 182], [694, 187]];
const sells = [[246, 563], [302, 503], [306, 524], [318, 503], [350, 441], [358, 406], [602, 217], [618, 205], [654, 152], [658, 154], [682, 215], [742, 163]];
const deals = ['290,530 305,530', '290,530 302,511', '306,516 318,508', '338,489 350,441', '342,488 358,410', '586,224 602,219', '606,210 618,207', '646,131 654,152', '646,137 658,154', '682,204 682,214', '694,179 742,166'];

function add(name, attrs, text) {
    const el = document.createElementNS(NS, name);
    for (const key in attrs) {
        el.setAttribute(key, attrs[key]);
    }
    if (text) el.textContent = text;
    svg.appendChild(el);
    return el;
}
function line(x1, y1, x2, y2, color, dash) {
    const attrs = { d: `M${x1} ${y1}L${x2} ${y2}`, stroke: color, 'shape-rendering': 'crispEdges' };
    if (dash) attrs['stroke-dasharray'] = dash;
    add('path', attrs);
}
function box(x, y, w, h, fill) {
    add('rect', { x: x, y: y, width: w, height: h, fill: fill });
}

// trend line lies under the grid
add('path', { d: 'M778 138L814 486L850 833', stroke: '#f00', 'stroke-width': 5, fill: 'none', 'shape-rendering': 'crispEdges' });
const handles = [[772, 132], [808, 480], [844, 827]];
handles.slice(1, 2).forEach(([x, y]) => {
    box(x, y, 13, 13, '#f00');
    box(x + 1, y + 1, 11, 11, '#000');
});

// grid
for (let x = 34; x < 1867; x += 32) {
    line(x + 0.5, 106, x + 0.5, 841, '#c0c0c0', '3 3');
}
for (let i = 0; i < 22; i++) {
    const y = Math.round(128 + i * 32.43);
    line(3, y + 0.5, 1867, y + 0.5, '#c0c0c0', '3 3');
    line(1868, y + 0.5, 1872, y + 0.5, '#000');
    add('text', { x: 1873, y: y + 4 }, (148.75 - i * 0.1).toFixed(3));
}
[186, 570, 906, 954, 1338, 1722].forEach(x => line(x + 0.5, 106, x + 0.5, 841, '#000', '3 3'));
line(3, 528.5, 1867, 528.5, '#c0c0c0');
line(3, 530.5, 1867, 530.5, '#c0c0c0');

// candles
let x = 2;
blocks.forEach(block => {
    block.bars.split(',').forEach(bar => {
        const [high, open, close, low] = bar.trim().split(' ').map(v => Math.floor(block.top + v / 3));
        const top = Math.min(open, close);
        const height = Math.abs(open - close) + 1;
        const left = Math.max(x - 1, 2);
        box(x, high, 1, low - high + 1, '#000');
        box(left, top, x + 2 - left, height, '#000');
        if (close < open && height > 2) {
            box(x, top + 1, 1, height - 2, '#fff');
        }
        x += 4;
    });
});

add('polyline', { points: average, fill: 'none', stroke: '#0000c8', 'shape-rendering': 'crispEdges' });

deals.forEach(points => add('polyline', { points: points, fill: 'none', stroke: '#0060b0', 'stroke-width': 1, 'stroke-dasharray': '3 3', 'shape-rendering': 'crispEdges' }));
// small stepped arrow heads
function marker([x, y], color) {
    add('path', { d: `M${x - 3} ${y - 1}h2v-2h3v2h2v2h-2v2h-3v-2h-2z`, fill: color, stroke: '#fff', 'stroke-width': 1, 'paint-order': 'stroke' });
    box(x, y - 4, 1, 8, color);
    box(x - 3, y, 7, 1, color);
}
sells.forEach(p => marker(p, '#e04020'));
buys.forEach(p => marker(p, '#0060b0'));

[handles[0], handles[2]].forEach(([x, y]) => {
    box(x, y, 13, 13, '#f00');
    box(x + 1, y + 1, 11, 11, '#000');
});

// frame, shift mark, price tag
line(2, 105.5, 1868, 105.5, '#000');
line(2.5, 105, 2.5, 842, '#000');
line(1867.5, 105, 1867.5, 842, '#000');
line(2, 841.5, 1868, 841.5, '#000');
add('path', { d: 'M1494 106h9l-4.5 4z', fill: '#b0b0b0' });
box(1870, 523, 39, 13, '#c0c0c0');
add('text', { x: 1873, y: 534, fill: '#fff' }, '147.509');

const times = '20 Aug 2025,20 Aug 16:30,20 Aug 20:30,21 Aug 00:30,21 Aug 04:30,21 Aug 08:30,21 Aug 12:30,21 Aug 16:30,21 Aug 20:30,22 Aug 00:30,22 Aug 04:30,22 Aug 08:30,22 Aug 12:30,22 Aug 16:30,22 Aug 20:30,25 Aug 00:30,25 Aug 04:30,25 Aug 08:30,25 Aug 12:30,25 Aug 16:30,25 Aug 20:30,26 Aug 00:30,26 Aug 04:30,26 Aug 08:30'.split(',');
times.forEach((t, i) => {
    line(2.5 + i * 64, 842, 2.5 + i * 64, 846, '#000');
    add('text', { x: 2 + i * 64, y: 854 }, t);
});
```
